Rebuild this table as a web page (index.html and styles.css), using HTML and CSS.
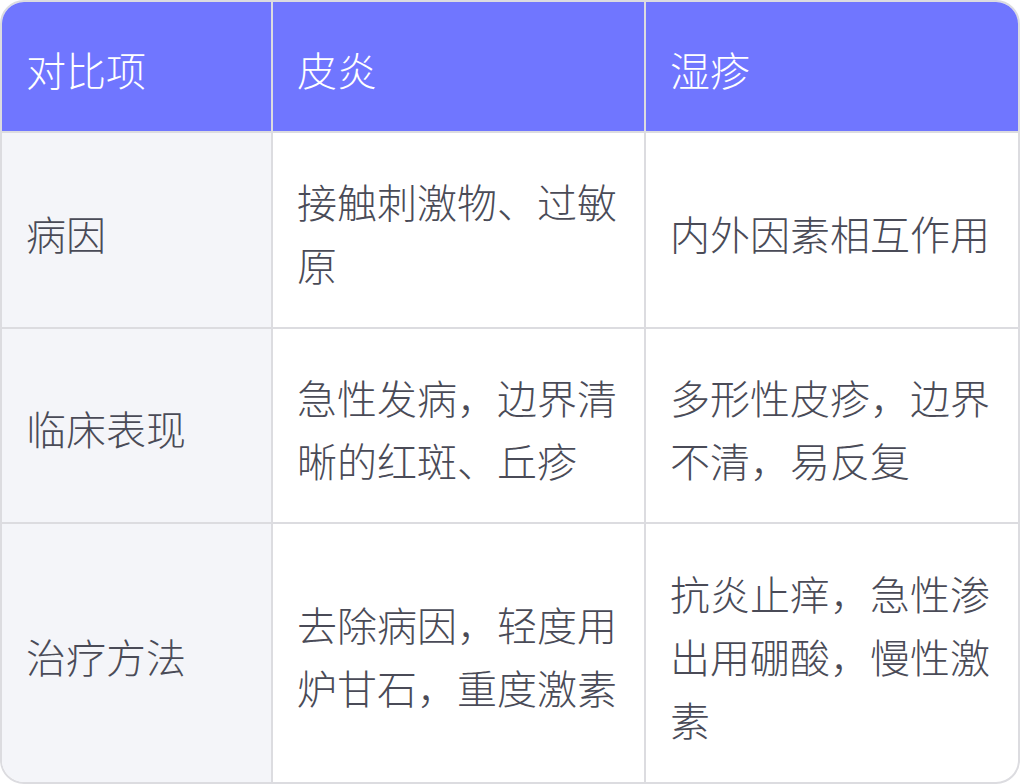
FILE: index.html
```html
<!DOCTYPE html>
<html lang="zh">
<head>
<meta charset="utf-8">
<link rel="stylesheet" href="styles.css">
</head>
<body>
<div class="card">
  <table class="cmp">
    <colgroup>
      <col class="c1">
      <col class="c2">
      <col class="c3">
    </colgroup>
    <thead>
      <tr class="head">
        <th>对比项</th>
        <th>皮炎</th>
        <th>湿疹</th>
      </tr>
    </thead>
    <tbody>
      <tr class="r1">
        <td class="label">病因</td>
        <td>接触刺激物、过敏原</td>
        <td>内外因素相互作用</td>
      </tr>
      <tr class="r2">
        <td class="label">临床表现</td>
        <td>急性发病，边界清晰的红斑、丘疹</td>
        <td>多形性皮疹，边界不清，易反复</td>
      </tr>
      <tr class="r3">
        <td class="label">治疗方法</td>
        <td>去除病因，轻度用炉甘石，重度激素</td>
        <td>抗炎止痒，急性渗出用硼酸，慢性激素</td>
      </tr>
    </tbody>
  </table>
</div>
</body>
</html>
```

FILE: styles.css
```css
html, body {
  margin: 0;
  padding: 0;
  background: #ffffff;
}
body {
  width: 1020px;
  height: 784px;
  font-family: "Noto Sans CJK SC", "Noto Sans", sans-serif;
}
.card {
  box-sizing: border-box;
  width: 1020px;
  height: 784px;
  border: 2px solid #dcdce0;
  border-radius: 24px;
  overflow: hidden;
  background: #ffffff;
}
.cmp {
  width: 1016px;
  height: 780px;
  table-layout: fixed;
  border-collapse: separate;
  border-spacing: 0;
}
.c1 { width: 271px; }
.c2 { width: 373px; }
.c3 { width: 372px; }
.cmp th, .cmp td {
  box-sizing: border-box;
  padding: 36px 24px 30px 24px;
  font-size: 40px;
  line-height: 63px;
  font-weight: 300;
  text-align: left;
  vertical-align: middle;
  border-right: 2px solid #dcdce0;
  border-bottom: 2px solid #dcdce0;
  color: #4a4b57;
}
.cmp tr > :last-child { border-right: none; }
.cmp tbody tr:last-child > * { border-bottom: none; }
.cmp th {
  background: #7076ff;
  color: #ffffff;
}
.cmp td.label {
  background: #f4f5f9;
}
.head { height: 131px; }
.r1 { height: 196px; }
.r2 { height: 195px; }
.r3 { height: 258px; }
```
